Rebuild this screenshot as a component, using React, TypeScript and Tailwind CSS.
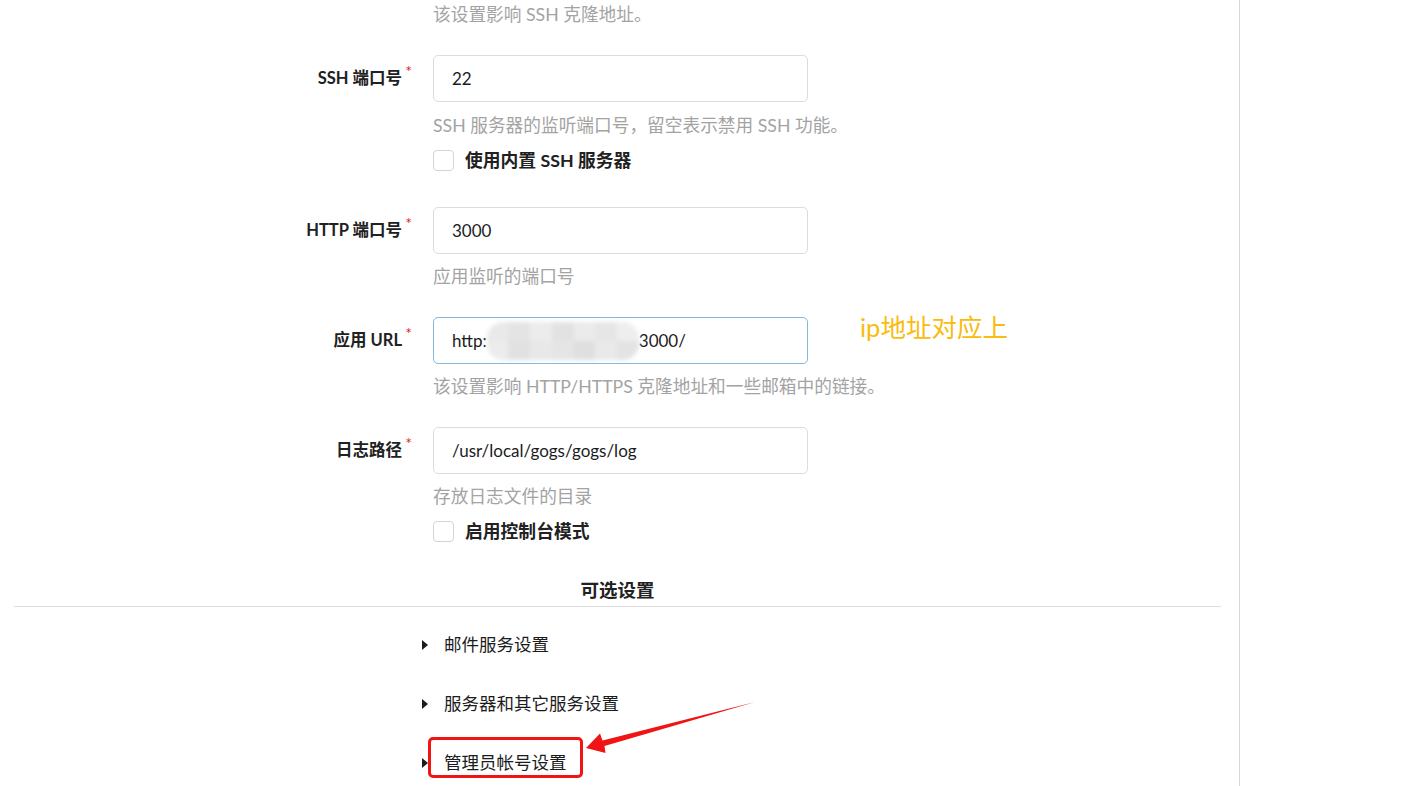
import React from "react";

const font = { fontFamily: "Lato, 'Noto Sans CJK SC', 'Noto Sans', sans-serif" };

function Label({ text }: { text: string }) {
  return (
    <div className="w-[419px] shrink-0 pr-[31px] text-right text-[16.5px] font-bold text-[#212121] leading-none">
      <span className="relative">
        {text}
        <span className="absolute -right-[10px] -top-[5px] text-[#db2828] font-normal text-[16px]">*</span>
      </span>
    </div>
  );
}

function Input({ children, focus }: { children: React.ReactNode; focus?: boolean }) {
  return (
    <div
      className={`relative w-[375px] h-[47px] rounded-[5px] border flex items-center pl-[18px] text-[17px] text-[#1b1c1d] ${
        focus ? "border-[#85b7d9]" : "border-[#dcdcdc]"
      }`}
    >
      {children}
    </div>
  );
}

function Help({ text, mt }: { text: string; mt: string }) {
  return (
    <div className={`pl-[419px] ${mt} text-[17.7px] leading-[24px] text-[#a3a3a3]`}>{text}</div>
  );
}

function Check({ text, mt }: { text: string; mt: string }) {
  return (
    <div className={`pl-[419px] ${mt} flex items-center h-[21px]`}>
      <div className="w-[21px] h-[21px] rounded-[4px] border border-[#d4d4d5] bg-white" />
      <span className="ml-[11px] text-[17.8px] font-bold text-[#212121] leading-none">{text}</span>
    </div>
  );
}

function Item({ text, mt }: { text: string; mt: string }) {
  return (
    <div className={`pl-[408px] ${mt} flex items-center h-[24px]`}>
      <svg width="7" height="10" viewBox="0 0 7 10">
        <polygon points="0,0 6,5 0,10" fill="#1b1c1d" />
      </svg>
      <span className="ml-[15px] text-[17.5px] text-[#1b1c1d] leading-none">{text}</span>
    </div>
  );
}

const blurCells = [
  ["#e9e9e9", "#e4e4e4", "#ececec", "#e2e2e2", "#ebebeb", "#e6e6e6", "#eeeeee"],
  ["#ececec", "#e1e1e1", "#e8e8e8", "#e5e5e5", "#dfdfdf", "#e9e9e9", "#e3e3e3"],
];

export default function App() {
  return (
    <div className="relative w-[1424px] h-[786px] overflow-hidden bg-white flex" style={font}>
      <div className="w-[1240px] shrink-0 pl-[14px] pr-[18px] border-r border-[#d6d6d6]">
        <Help text="该设置影响 SSH 克隆地址。" mt="mt-[3px]" />

        <div className="flex items-center mt-[28px]">
          <Label text="SSH 端口号" />
          <Input>22</Input>
        </div>
        <Help text="SSH 服务器的监听端口号，留空表示禁用 SSH 功能。" mt="mt-[12px]" />
        <Check text="使用内置 SSH 服务器" mt="mt-[12px]" />

        <div className="flex items-center mt-[36px]">
          <Label text="HTTP 端口号" />
          <Input>3000</Input>
        </div>
        <Help text="应用监听的端口号" mt="mt-[11px]" />

        <div className="flex items-center mt-[28px]">
          <Label text="应用 URL" />
          <div className="flex items-center">
            <Input focus>
              <span>http:</span>
              <span className="relative inline-block w-[152px] h-[38px]">
                <span className="absolute inset-0 flex flex-col rounded-[16px] overflow-hidden blur-[2px]">
                  {blurCells.map((row, i) => (
                    <span key={i} className="flex flex-1">
                      {row.map((c, j) => (
                        <span key={j} className="flex-1" style={{ background: c }} />
                      ))}
                    </span>
                  ))}
                </span>
              </span>
              <span>3000/</span>
            </Input>
            <span className="ml-[52px] -mt-[26px] text-[25.5px] leading-none text-[#f9bb0d]">ip地址对应上</span>
          </div>
        </div>
        <Help text="该设置影响 HTTP/HTTPS 克隆地址和一些邮箱中的链接。" mt="mt-[11px]" />

        <div className="flex items-center mt-[28px]">
          <Label text="日志路径" />
          <Input>/usr/local/gogs/gogs/log</Input>
        </div>
        <Help text="存放日志文件的目录" mt="mt-[11px]" />
        <Check text="启用控制台模式" mt="mt-[12px]" />

        <div className="mt-[36px] pb-[4px] border-b border-[#dedede] text-center text-[18.5px] font-bold text-[#212121] leading-[24px]">
          可选设置
        </div>

        <Item text="邮件服务设置" mt="mt-[26px]" />
        <Item text="服务器和其它服务设置" mt="mt-[35px]" />
        <Item text="管理员帐号设置" mt="mt-[35px]" />
      </div>

      <div className="absolute left-[428px] top-[737px] w-[155px] h-[41px] rounded-[5px] border-[3px] border-[#f01414]" />
      <svg className="absolute left-0 top-0 pointer-events-none" width="1424" height="786">
        <polygon
          points="586,748 600,733.5 602.5,740.5 755,702 604.5,746 605.5,753"
          fill="#f01414"
        />
      </svg>
    </div>
  );
}
